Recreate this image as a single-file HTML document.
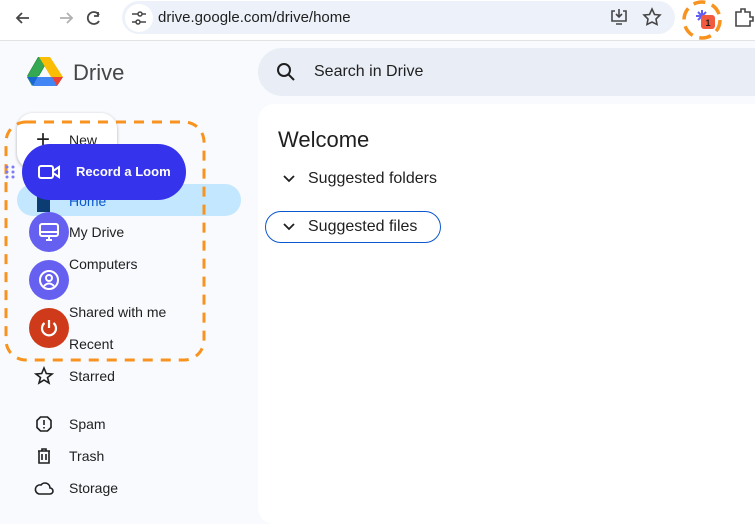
<html><head><style>
body{margin:0;width:755px;height:504px;overflow:hidden;background:#f8fafd;font-family:"Liberation Sans",sans-serif;position:relative;color:#1f1f1f}
.a{position:absolute}
.nav{position:absolute;left:69px;font-size:14px;color:#1f1f1f}
</style></head><body>
<div class="a" style="left:0;top:0;width:755px;height:40px;background:#fff;border-bottom:1px solid #e3e3e3"></div>
<svg class="a" style="left:12px;top:8px" width="90" height="20" viewBox="0 0 90 20"><g fill="none" stroke-width="1.8"><path d="M17 10H5M10 5L5 10L10 15" stroke="#474747"/><path d="M48 10H60M55 5L60 10L55 15" stroke="#b0b0b0"/><path d="M89 7A6 6 0 1 0 89 13" stroke="#474747" transform="translate(-2 0)"/><path d="M86 4V8H82" stroke="#474747"/></g></svg>
<div class="a" style="left:122px;top:1px;width:553px;height:33px;border-radius:17px;background:#edf2fa"></div>
<div class="a" style="left:125px;top:4px;width:28px;height:28px;border-radius:14px;background:#fff"></div>
<svg class="a" style="left:131px;top:10px" width="16" height="16"><g stroke="#474747" stroke-width="1.5" fill="none"><path d="M1 4H7M11 4H15M1 12H5M9 12H15"/><circle cx="9" cy="4" r="2"/><circle cx="7" cy="12" r="2"/></g></svg>
<div class="a" style="left:158px;top:9px;font-size:15px;color:#1f1f1f">drive.google.com/drive/home</div>
<svg class="a" style="left:610px;top:7px" width="60" height="20"><g stroke="#474747" stroke-width="1.6" fill="none"><path d="M5 4H2V14H16V4H13M9 2V10M6 7L9 10L12 7M6 17H12"/><path d="M42 2L44.5 7.5L50 8L46 12L47 17.5L42 15L37 17.5L38 12L34 8L39.5 7.5Z"/></g></svg>
<svg class="a" style="left:678px;top:0" width="50" height="42"><ellipse cx="24" cy="20" rx="18" ry="18" fill="none" stroke="#f7931e" stroke-width="3.5" stroke-dasharray="12 7"/><g stroke="#625df5" stroke-width="2"><path d="M24 10V22M18 16H30M20 12L28 20M28 12L20 20"/></g><rect x="23" y="15" width="14" height="14" rx="3" fill="#f25a40"/><text x="30" y="26" font-size="9" font-weight="bold" text-anchor="middle" fill="#1f1f1f" font-family="Liberation Sans">1</text></svg>
<svg class="a" style="left:733px;top:7px" width="22" height="22"><path d="M3 5H8V2H12V5H17V10H20V14H17V19H3Z" fill="none" stroke="#474747" stroke-width="1.6"/></svg>
<svg class="a" style="left:26px;top:55px" width="38" height="34" viewBox="0 0 38 34"><path d="M12 2H24L13 21H1Z" fill="#1e8e3e"/><path d="M13 2L1 22L6 31L18 11Z" fill="#34a853"/><path d="M24 2L37 22H25L13 2Z" fill="#fbbc04"/><path d="M7 31H31L37 22H12Z" fill="#4285f4"/><path d="M31 31L37 22H26Z" fill="#ea4335"/><path d="M1 22L7 31L12 22Z" fill="#1967d2"/></svg>
<div class="a" style="left:73px;top:60px;font-size:22px;color:#444746">Drive</div>
<div class="a" style="left:258px;top:48px;width:520px;height:48px;border-radius:24px;background:#e9eef6"></div>
<svg class="a" style="left:276px;top:62px" width="20" height="20"><circle cx="8" cy="8" r="6" fill="none" stroke="#1f1f1f" stroke-width="2"/><path d="M12.5 12.5L18 18" stroke="#1f1f1f" stroke-width="2"/></svg>
<div class="a" style="left:314px;top:63px;font-size:16px;color:#1f1f1f">Search in Drive</div>
<div class="a" style="left:258px;top:104px;width:520px;height:420px;border-radius:16px;background:#fff"></div>
<div class="a" style="left:278px;top:127px;font-size:22px">Welcome</div>
<div class="a" style="left:308px;top:170px;font-size:16px">Suggested folders</div>
<svg class="a" style="left:283px;top:174px" width="12" height="10"><path d="M1 2L6 7L11 2" fill="none" stroke="#1f1f1f" stroke-width="1.8"/></svg>
<div class="a" style="left:265px;top:211px;width:174px;height:30px;border:1px solid #0b57d0;border-radius:16px;background:#fff"></div>
<div class="a" style="left:308px;top:218px;font-size:16px">Suggested files</div>
<svg class="a" style="left:283px;top:222px" width="12" height="10"><path d="M1 2L6 7L11 2" fill="none" stroke="#1f1f1f" stroke-width="1.8"/></svg>
<div class="a" style="left:17px;top:113px;width:100px;height:56px;border-radius:16px;background:#fff;box-shadow:0 1px 3px rgba(0,0,0,.3)"></div>
<div class="a" style="left:36px;top:128px;font-size:24px;line-height:24px">+</div>
<div class="a" style="left:69px;top:132px;font-size:14px">New</div>
<div class="a" style="left:17px;top:184px;width:224px;height:32px;border-radius:16px;background:#c2e7ff"></div>
<div class="nav" style="top:193px;color:#0b57d0">Home</div>
<div class="a" style="left:37px;top:195px;width:13px;height:17px;background:#0b3d72"></div>
<div class="nav" style="top:224px">My Drive</div>
<div class="nav" style="top:256px">Computers</div>
<div class="nav" style="top:304px">Shared with me</div>
<div class="nav" style="top:336px">Recent</div>
<div class="nav" style="top:368px">Starred</div>
<div class="nav" style="top:416px">Spam</div>
<div class="nav" style="top:448px">Trash</div>
<div class="nav" style="top:480px">Storage</div>
<svg class="a" style="left:34px;top:366px" width="20" height="136" fill="none" stroke="#1f1f1f" stroke-width="1.6"><path d="M10 2L12.3 7.5L18 8L13.5 11.5L15 17L10 14L5 17L6.5 11.5L2 8L7.7 7.5Z"/><path d="M6.5 51H13.5L17 54.5V61.5L13.5 65H6.5L3 61.5V54.5Z"/><path d="M10 54V59M10 61V62.5"/><path d="M4 85H16M8 85V83H12V85M5 85V97H15V85M8 88V94M12 88V94"/><path d="M5 128H16A3 3 0 0 0 16 122A5 5 0 0 0 7 119A4.5 4.5 0 0 0 5 128Z"/></svg>
<svg class="a" style="left:0;top:115px" width="215" height="255"><rect x="6" y="7" width="198" height="238" rx="20" fill="none" stroke="#f7931e" stroke-width="3" stroke-dasharray="10 8"/></svg>
<svg class="a" style="left:4px;top:165px" width="14" height="16" fill="#7d79f7"><circle cx="3" cy="2" r="1.5"/><circle cx="9" cy="2" r="1.5"/><circle cx="3" cy="7" r="1.5"/><circle cx="9" cy="7" r="1.5"/><circle cx="3" cy="12" r="1.5"/><circle cx="9" cy="12" r="1.5"/></svg>
<div class="a" style="left:22px;top:144px;width:164px;height:56px;border-radius:28px;background:#3533ec"></div>
<svg class="a" style="left:38px;top:164px" width="24" height="16" fill="none" stroke="#fff" stroke-width="2"><rect x="1" y="2" width="14" height="12" rx="2"/><path d="M15 7L21 3V13L15 9"/></svg>
<div class="a" style="left:76px;top:164px;font-size:13px;font-weight:bold;color:#fff">Record a Loom</div>
<div class="a" style="left:29px;top:212px;width:40px;height:40px;border-radius:20px;background:#6660f0"></div>
<svg class="a" style="left:38px;top:221px" width="22" height="22" fill="none" stroke="#fff" stroke-width="2"><rect x="2" y="3" width="18" height="12" rx="2"/><path d="M2 11H20M8 19H14M11 15V19"/></svg>
<div class="a" style="left:29px;top:260px;width:40px;height:40px;border-radius:20px;background:#6660f0"></div>
<svg class="a" style="left:38px;top:269px" width="22" height="22" fill="none" stroke="#fff" stroke-width="2"><circle cx="11" cy="11" r="9"/><circle cx="11" cy="9" r="3"/><path d="M6 17Q11 12 16 17"/></svg>
<div class="a" style="left:29px;top:308px;width:40px;height:40px;border-radius:20px;background:#cf3b1a"></div>
<svg class="a" style="left:38px;top:317px" width="22" height="22" fill="none" stroke="#fff" stroke-width="2.2"><path d="M11 3V11M6.5 6A7 7 0 1 0 15.5 6"/></svg>
</body></html>
